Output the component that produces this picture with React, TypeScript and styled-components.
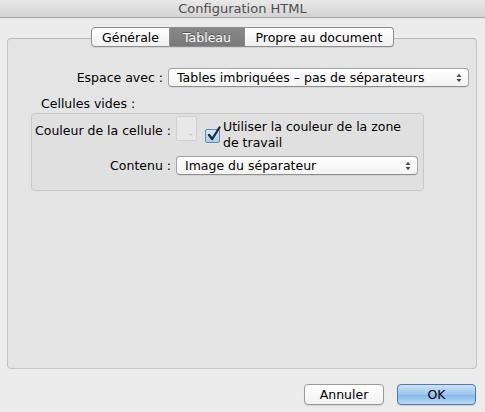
import React from 'react';
import styled, { createGlobalStyle } from 'styled-components';

const Global = createGlobalStyle`
    html, body {
        margin: 0;
        padding: 0;
        background: #ececec;
    }
    body {
        font-family: "DejaVu Sans", "Liberation Sans", sans-serif;
        font-size: 12.5px;
        color: #000;
    }
`;

const Window = styled.div`
    width: 485px;
    height: 412px;
    display: flex;
    flex-direction: column;
    background: #ececec;
    overflow: hidden;
`;

const TitleBar = styled.div`
    height: 17px;
    flex: none;
    display: flex;
    align-items: center;
    justify-content: center;
    background: linear-gradient(#e8e8e8, #d3d3d3);
    border-bottom: 1px solid #a8a8a8;
    color: #4d4d4d;
    font-size: 13px;
`;

const Body = styled.div`
    flex: 1;
    display: flex;
    flex-direction: column;
    padding: 9px 8px 0 7px;
`;

const TabRow = styled.div`
    display: flex;
    justify-content: center;
    height: 21px;
    margin-left: 1px;
    margin-bottom: -10px;
    position: relative;
    z-index: 1;
`;

const Tab = styled.div<{ $active?: boolean; $w: number }>`
    width: ${p => p.$w}px;
    height: 20px;
    box-sizing: border-box;
    display: flex;
    align-items: center;
    justify-content: center;
    border: 1px solid #8e8e8e;
    border-left-width: 0;
    background: ${p => (p.$active ? 'linear-gradient(#888888, #7a7a7a)' : 'linear-gradient(#ffffff, #f0f0f0)')};
    color: ${p => (p.$active ? '#ffffff' : '#000')};
    text-shadow: ${p => (p.$active ? '0 -1px 0 #555' : 'none')};
    box-shadow: 0 1px 0 rgba(0, 0, 0, 0.08);
    &:first-child {
        border-left-width: 1px;
        border-radius: 4px 0 0 4px;
    }
    &:last-child {
        border-radius: 0 4px 4px 0;
    }
`;

const Panel = styled.div`
    height: 331px;
    box-sizing: border-box;
    background: #e4e4e4;
    border: 1px solid #c4c4c4;
    border-top-color: #b8b8b8;
    border-radius: 4px;
    padding: 18px 7px 0 0;
`;

const Row = styled.div`
    display: flex;
    align-items: center;
`;

const Label = styled.div<{ $w: number }>`
    width: ${p => p.$w}px;
    flex: none;
    text-align: right;
    padding-right: 5px;
    box-sizing: border-box;
    white-space: nowrap;
`;

const Select = styled.div<{ $w: number }>`
    width: ${p => p.$w}px;
    height: 19px;
    box-sizing: border-box;
    border: 1px solid #a3a3a3;
    border-bottom-color: #8f8f8f;
    border-radius: 4px;
    background: linear-gradient(#ffffff, #f3f3f3);
    box-shadow: 0 1px 0 rgba(0, 0, 0, 0.06);
    display: flex;
    align-items: center;
    justify-content: space-between;
    padding: 0 6px 0 8px;
    white-space: nowrap;
`;

const Arrows = () => (
    <svg width="6" height="10" viewBox="0 0 6 10">
        <path d="M0.5 4 L3 0.8 L5.5 4 Z" fill="#4a4a4a" />
        <path d="M0.5 6 L3 9.2 L5.5 6 Z" fill="#4a4a4a" />
    </svg>
);

const SectionTitle = styled.div`
    margin: 9px 0 0 33px;
    line-height: 15px;
`;

const GroupBox = styled.div`
    margin: 2px 0 0 23px;
    width: 393px;
    height: 78px;
    box-sizing: border-box;
    border: 1px solid #c8c8c8;
    border-radius: 4px;
    background: #e0e0e0;
    padding: 2px 0 0 0;
`;

const ColorWell = styled.div`
    width: 25px;
    height: 25px;
    box-sizing: border-box;
    border: 1px solid #d0d0d0;
    background: #e8e8e8;
    border-radius: 2px;
    position: relative;
    &::after {
        content: '';
        position: absolute;
        right: 3px;
        bottom: 4px;
        border-left: 2px solid transparent;
        border-right: 2px solid transparent;
        border-top: 2px solid #c8c8c8;
    }
`;

const CheckWrap = styled.div`
    display: flex;
    align-items: flex-start;
    margin-left: 8px;
`;

const CheckBox = styled.div`
    width: 15px;
    height: 14px;
    margin-top: 13px;
    box-sizing: border-box;
    border: 1px solid #6a88a8;
    border-radius: 2px;
    background: linear-gradient(#d3e6f7, #a9cdee);
    position: relative;
    flex: none;
`;

const CheckMark = styled.svg`
    position: absolute;
    left: 1px;
    top: -4px;
`;

const CheckText = styled.div`
    margin-left: 3px;
    margin-top: 3px;
    line-height: 16px;
    width: 200px;
`;

const Footer = styled.div`
    display: flex;
    justify-content: flex-end;
    gap: 13px;
    padding: 15px 1px 0 0;
`;

const Button = styled.div<{ $primary?: boolean }>`
    width: ${p => (p.$primary ? 79 : 80)}px;
    height: 21px;
    box-sizing: border-box;
    border: 1px solid ${p => (p.$primary ? '#5478a8' : '#9a9a9a')};
    border-radius: 4px;
    background: ${p =>
        p.$primary
            ? 'linear-gradient(#cfe3f7 0%, #9ac4ec 50%, #82b6ea 51%, #b8daf8 100%)'
            : 'linear-gradient(#ffffff, #f1f1f1)'};
    box-shadow: 0 1px 1px rgba(0, 0, 0, 0.12);
    display: flex;
    align-items: center;
    justify-content: center;
`;

export default function App() {
    return (
        <Window>
            <Global />
            <TitleBar>Configuration HTML</TitleBar>
            <Body>
                <TabRow>
                    <Tab $w={79}>Générale</Tab>
                    <Tab $w={75} $active>
                        Tableau
                    </Tab>
                    <Tab $w={149}>Propre au document</Tab>
                </TabRow>
                <Panel>
                    <Row style={{ marginTop: 11 }}>
                        <Label $w={160}>Espace avec :</Label>
                        <Select $w={302}>
                            <span>Tables imbriquées – pas de séparateurs</span>
                            <Arrows />
                        </Select>
                    </Row>
                    <SectionTitle>Cellules vides :</SectionTitle>
                    <GroupBox>
                        <Row style={{ alignItems: 'flex-start' }}>
                            <Label $w={144} style={{ paddingTop: 7 }}>
                                Couleur de la cellule :
                            </Label>
                            <ColorWell />
                            <CheckWrap>
                                <CheckBox>
                                    <CheckMark width="14" height="16" viewBox="0 0 14 16">
                                        <path
                                            d="M2 9 L5.2 13 L12.5 1.5"
                                            fill="none"
                                            stroke="#1b2a3a"
                                            strokeWidth="2.3"
                                            strokeLinecap="round"
                                            strokeLinejoin="round"
                                        />
                                    </CheckMark>
                                </CheckBox>
                                <CheckText>
                                    Utiliser la couleur de la zone
                                    <br />
                                    de travail
                                </CheckText>
                            </CheckWrap>
                        </Row>
                        <Row style={{ marginTop: 5 }}>
                            <Label $w={144}>Contenu :</Label>
                            <Select $w={242}>
                                <span>Image du séparateur</span>
                                <Arrows />
                            </Select>
                        </Row>
                    </GroupBox>
                </Panel>
                <Footer>
                    <Button>Annuler</Button>
                    <Button $primary>OK</Button>
                </Footer>
            </Body>
        </Window>
    );
}
